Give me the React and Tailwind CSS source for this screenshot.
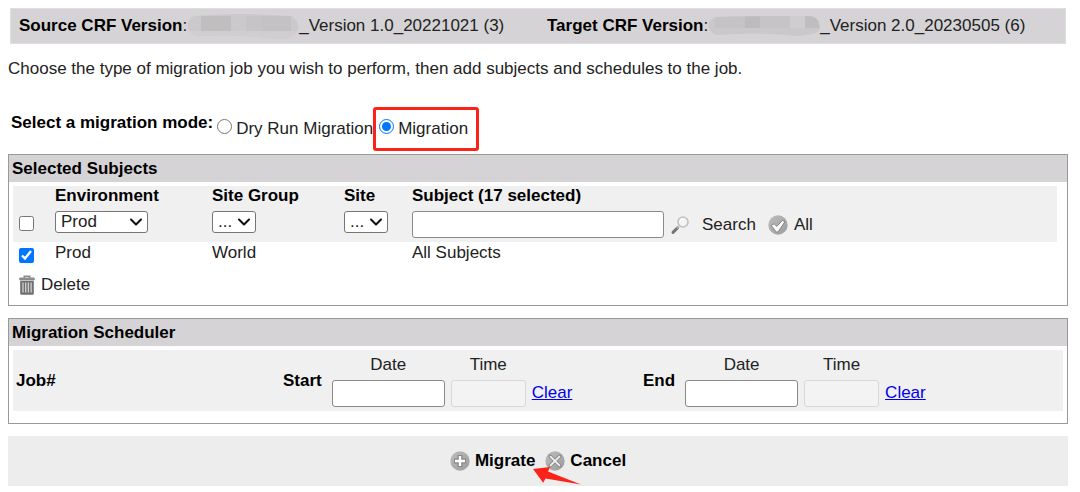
import { useId, useState } from 'react';
import { ChevronDown } from 'lucide-react';

function RoundIcon({ children, id }) {
  return (
    <svg viewBox="0 0 20 20" className="size-5 shrink-0" aria-hidden="true">
      <defs>
        <linearGradient id={id} x1="0" y1="0" x2="1" y2="1">
          <stop offset="0" stopColor="#bdbdbd" />
          <stop offset="1" stopColor="#9c9c9c" />
        </linearGradient>
      </defs>
      <circle cx="10" cy="10" r="9.7" fill={`url(#${id})`} />
      {children}
    </svg>
  );
}

function PlusIcon() {
  return (
    <RoundIcon id="plus-bg">
      <path d="M10 4v12M4 10h12" stroke="#888" strokeWidth="5" />
      <path d="M10 5v10M5 10h10" stroke="#fff" strokeWidth="2.4" />
    </RoundIcon>
  );
}

function CrossIcon() {
  return (
    <RoundIcon id="cross-bg">
      <path d="M5.2 5.2l9.6 9.6M14.8 5.2l-9.6 9.6" stroke="#8c8c8c" strokeWidth="3.6" strokeLinecap="round" />
      <path d="M5.6 5.6l8.8 8.8M14.4 5.6l-8.8 8.8" stroke="#f0f0f0" strokeWidth="1.8" strokeLinecap="round" />
    </RoundIcon>
  );
}

function CheckIcon() {
  return (
    <RoundIcon id="check-bg">
      <path d="M3.2 10.4l3-1.6 2.6 2.6 5.6-6 2.6 1.2-7 10.4H8.2z" fill="#f8f8f8" stroke="#858585" strokeWidth="1" strokeLinejoin="round" />
    </RoundIcon>
  );
}

function SearchIcon() {
  return (
    <svg viewBox="0 0 20 20" className="size-5 shrink-0" aria-hidden="true">
      <path d="M3 17.4l4.6-4.6" stroke="#757575" strokeWidth="3" strokeLinecap="round" />
      <path d="M7 13.2l1.8-1.8" stroke="#b0b0b0" strokeWidth="2" />
      <circle cx="13" cy="7" r="5" fill="#f3f3f3" stroke="#c0c0c0" strokeWidth="1.6" />
      <path d="M10 6.6a3.2 3.2 0 0 1 3-2.6" stroke="#fff" strokeWidth="1.4" fill="none" />
    </svg>
  );
}

function TrashIcon() {
  return (
    <svg viewBox="0 0 16 20" className="h-5 w-4 shrink-0" aria-hidden="true">
      <path d="M5.2 3V1.2h5.6V3" fill="none" stroke="#8a8a8a" strokeWidth="1.4" />
      <rect x="0.2" y="2.6" width="15.6" height="2.8" rx="1.2" fill="#8c8c8c" />
      <path d="M1.2 6h13.6v12.4a1.4 1.4 0 0 1-1.4 1.4H2.6a1.4 1.4 0 0 1-1.4-1.4z" fill="#707070" />
      <path d="M4 7.4v10M6.7 7.4v10M9.4 7.4v10M12.1 7.4v10" stroke="#d0d0d0" strokeWidth="1.3" />
    </svg>
  );
}

// smudges that hide the study names
function SourceSmudge() {
  return (
    <svg viewBox="0 0 112 28" className="h-7 w-28 shrink-0" aria-hidden="true">
      <clipPath id="source-smudge">
        <path d="M8 4Q50 0 104 4Q112 8 111 17Q108 25 98 27L78 26Q50 22 12 24Q0 22 1 13Q1 6 8 4Z" />
      </clipPath>
      <g clipPath="url(#source-smudge)">
        <path d="M0 0h112v28H0z" fill="#cbc9cb" />
        <path d="M14 4h30v15H14z" fill="#c1bec0" />
        <path d="M44 4h15v15H44z" fill="#cbc9cb" />
        <path d="M59 4h15v15H59z" fill="#c6c4c6" />
        <path d="M74 4h30v15H74z" fill="#c4c2c4" />
        <path d="M0 19h112v9H0z" fill="#d0ced0" />
      </g>
    </svg>
  );
}

function TargetSmudge() {
  return (
    <svg viewBox="0 0 112 28" className="h-7 w-28 shrink-0" aria-hidden="true">
      <clipPath id="target-smudge">
        <path d="M8 5Q50 4 100 4Q110 4 111 12Q114 20 104 22L92 24Q50 20 8 23Q-1 19 1 11Q2 7 8 5Z" />
      </clipPath>
      <g clipPath="url(#target-smudge)">
        <path d="M0 0h112v28H0z" fill="#cac8ca" />
        <path d="M7 4h30v12H7z" fill="#c5c3c5" />
        <path d="M37 4h15v12H37z" fill="#bdbbbd" />
        <path d="M52 4h30v12H52z" fill="#c6c4c6" />
        <path d="M82 4h15v12H82z" fill="#cfcecf" />
        <path d="M97 4h15v12H97z" fill="#bfbdbf" />
      </g>
    </svg>
  );
}

function Select({ id, options, className }) {
  return (
    <span className={`grid h-[22px] items-center ${className}`}>
      <select
        id={id}
        className="col-start-1 row-start-1 h-full w-full appearance-none rounded-[3px] border border-[#767676] bg-white pl-[5px] leading-5"
      >
        {options.map((o) => (
          <option key={o}>{o}</option>
        ))}
      </select>
      <ChevronDown
        className="pointer-events-none col-start-1 row-start-1 mr-[2px] size-5 justify-self-end text-[#111]"
        strokeWidth={2.5}
      />
    </span>
  );
}

function Panel({ title, children }) {
  return (
    <section className="border border-[#999]">
      <h2 className="bg-[#d5d3d5] px-[3px] leading-[27px] font-bold text-black">{title}</h2>
      {children}
    </section>
  );
}

function Schedule({ label, className }) {
  const id = useId();
  return (
    <fieldset aria-label={label} className={`flex items-center ${className}`}>
      <span className="mr-[10px] font-bold text-black">{label}</span>
      <div className="grid grid-cols-[113px_75px_auto] items-center gap-x-[6px] gap-y-[3px] pb-[2px]">
        <label htmlFor={`${id}-date`} className="text-center leading-6">Date</label>
        <label htmlFor={`${id}-time`} className="text-center leading-6">Time</label>
        <input
          id={`${id}-date`}
          type="text"
          className="col-start-1 h-[27px] min-w-0 rounded-[3px] border border-[#8a8a8a] bg-white px-1"
        />
        <input
          id={`${id}-time`}
          type="text"
          disabled
          className="h-[27px] min-w-0 rounded-[3px] border border-[#d8d8d8] bg-[#f3f3f3] px-1"
        />
        <a href="#clear" className="text-[#0000ee] underline">Clear</a>
      </div>
    </fieldset>
  );
}

export default function App() {
  const [mode, setMode] = useState('migration');

  return (
    <main className="bg-white pt-2 pr-3 pb-[6px] pl-2 font-['Liberation_Sans',Arial,sans-serif] text-[17px] leading-5 text-[#222]">
      <header className="mr-[2px] ml-[2px] flex h-9 items-center border border-[#e0dfe0] bg-[#d5d3d5] pl-2">
        <div className="flex w-[528px] items-center">
          <strong className="text-black">Source CRF Version</strong>:
          <SourceSmudge />
          <span>_Version 1.0_20221021 (3)</span>
        </div>
        <div className="flex items-center">
          <strong className="text-black">Target CRF Version</strong>:
          <TargetSmudge />
          <span>_Version 2.0_20230505 (6)</span>
        </div>
      </header>

      <p className="mt-[15px]">
        Choose the type of migration job you wish to perform, then add subjects and schedules to the job.
      </p>

      <div role="radiogroup" aria-labelledby="mode-label" className="mt-7 flex h-11 items-center pl-[3px]">
        <span id="mode-label" className="mr-1 pb-3 font-bold text-black">Select a migration mode:</span>
        <label className="flex items-start gap-1">
          <input
            type="radio"
            name="mode"
            className="size-[15px] accent-[#0075ff]"
            checked={mode === 'dry'}
            onChange={() => setMode('dry')}
          />
          Dry Run Migration
        </label>
        <label className="flex h-11 items-center rounded-[3px] border-3 border-[#fb2318] pr-2 pl-[3px]">
          <span className="flex items-start gap-1">
            <input
              type="radio"
              name="mode"
              className="size-[15px] accent-[#0075ff]"
              checked={mode === 'migration'}
              onChange={() => setMode('migration')}
            />
            Migration
          </span>
        </label>
      </div>

      <div className="mt-[3px] flex flex-col gap-3">
        <Panel title="Selected Subjects">
          <div className="pt-1 pr-[10px] pb-[10px] pl-1">
            <table className="w-full table-fixed text-left">
              <colgroup>
                <col className="w-[42px]" />
                <col className="w-[157px]" />
                <col className="w-[132px]" />
                <col className="w-[68px]" />
                <col />
              </colgroup>
              <thead className="bg-[#f0f0f0] text-black">
                <tr className="h-6 align-top">
                  <td />
                  <th><label htmlFor="environment">Environment</label></th>
                  <th><label htmlFor="site-group">Site Group</label></th>
                  <th><label htmlFor="site">Site</label></th>
                  <th><label htmlFor="subject">Subject (17 selected)</label></th>
                </tr>
              </thead>
              <tbody>
                <tr className="h-8 bg-[#f0f0f0] align-top *:pt-px">
                  <td className="pl-[6px]">
                    <input type="checkbox" aria-label="Select all rows" className="mt-[5px] block size-[15px]" />
                  </td>
                  <td><Select id="environment" options={['Prod']} className="w-[93px]" /></td>
                  <td><Select id="site-group" options={['...']} className="w-11" /></td>
                  <td><Select id="site" options={['...']} className="w-11" /></td>
                  <td>
                    <div className="flex items-center">
                      <input
                        id="subject"
                        type="text"
                        className="h-[27px] w-[252px] rounded-[3px] border border-[#8a8a8a] bg-white px-1"
                      />
                      <button type="button" className="ml-[6px] flex items-center gap-3">
                        <SearchIcon />
                        Search
                      </button>
                      <button type="button" className="ml-3 flex items-center gap-[6px]">
                        <CheckIcon />
                        All
                      </button>
                    </div>
                  </td>
                </tr>
                <tr className="h-[29px] align-top *:pt-px">
                  <td className="pl-[6px]">
                    <input
                      type="checkbox"
                      aria-label="Select Prod, World, All Subjects"
                      defaultChecked
                      className="mt-[5px] block size-[15px] accent-[#0075ff]"
                    />
                  </td>
                  <td>Prod</td>
                  <td>World</td>
                  <td />
                  <td>All Subjects</td>
                </tr>
              </tbody>
            </table>
            <button type="button" className="mt-1 ml-[6px] flex items-center gap-[6px]">
              <TrashIcon />
              Delete
            </button>
          </div>
        </Panel>

        <Panel title="Migration Scheduler">
          <div className="px-1 pt-1 pb-3">
            <div className="flex h-[61px] items-center bg-[#f0f0f0] pl-[3px]">
              <span className="w-[267px] font-bold text-black">Job#</span>
              <Schedule label="Start" className="w-[360px]" />
              <Schedule label="End" />
            </div>
          </div>
        </Panel>

        <footer className="flex h-[50px] items-center justify-center gap-[10px] bg-[#ededed] font-bold text-black">
          <button type="button" className="relative flex items-center gap-[5px]">
            <PlusIcon />
            Migrate
            {/* pointer to the migrate action */}
            <svg viewBox="0 0 50 20" className="pointer-events-none absolute top-4 left-[82px] h-5 w-[50px]" aria-hidden="true">
              <path d="M1 2L18 0l-2 4.4L49 17.6 13.6 11.4l-2.4 4.4z" fill="#fb2318" />
            </svg>
          </button>
          <button type="button" className="flex items-center gap-[5px]">
            <CrossIcon />
            Cancel
          </button>
        </footer>
      </div>
    </main>
  );
}
